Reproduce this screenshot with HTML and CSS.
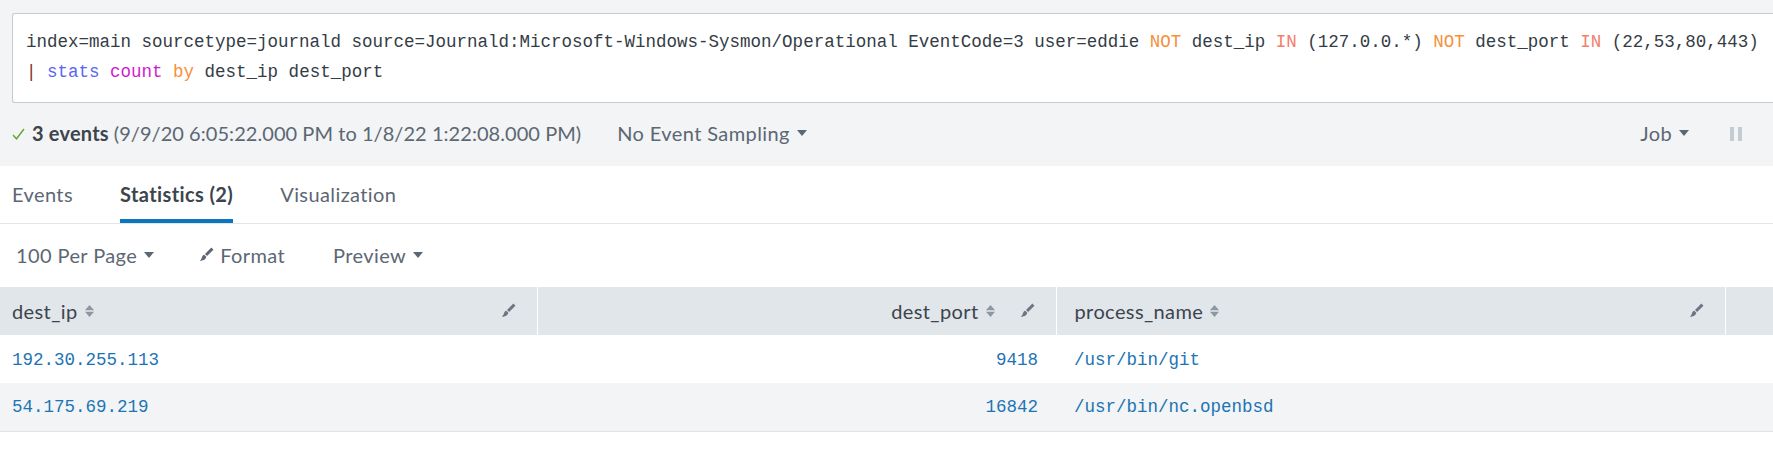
FILE: index.html
```html
<!DOCTYPE html>
<html lang="en">
<head>
<meta charset="utf-8">
<title>Search</title>
<link rel="stylesheet" href="styles.css">
</head>
<body>
<div class="search-area">
  <div class="search-box">
    <div class="line">index=main sourcetype=journald source=Journald:Microsoft-Windows-Sysmon/Operational EventCode=3 user=eddie <span class="kw">NOT</span> dest_ip <span class="kw-in">IN</span> (127.0.0.*) <span class="kw">NOT</span> dest_port <span class="kw-in">IN</span> (22,53,80,443)</div>
    <div class="line"><span class="pipe">|</span> <span class="cmd">stats</span> <span class="fn">count</span> <span class="kw">by</span> dest_ip dest_port</div>
  </div>
</div>

<div class="status">
  <div class="status-left">
    <svg class="check" width="13" height="12" viewBox="0 0 13 12"><polyline points="1,7 4.5,10.8 12,1" fill="none" stroke="#65a637" stroke-width="1.4"/></svg>
    <span class="count">3 events</span>
    <span class="range">(9/9/20 6:05:22.000 PM to 1/8/22 1:22:08.000 PM)</span>
    <span class="dropdown sampling">No Event Sampling <svg class="caret" width="10" height="6" viewBox="0 0 10 6"><polygon points="0,0 10,0 5,6" fill="#5c6773"/></svg></span>
  </div>
  <div class="status-right">
    <span class="dropdown">Job <svg class="caret" width="10" height="6" viewBox="0 0 10 6"><polygon points="0,0 10,0 5,6" fill="#5c6773"/></svg></span>
    <svg class="pause" width="12" height="14" viewBox="0 0 12 14"><rect x="0" y="0" width="4" height="14" fill="#c3cbd4"/><rect x="8" y="0" width="4" height="14" fill="#c3cbd4"/></svg>
  </div>
</div>

<nav class="tabs">
  <span class="tab">Events</span>
  <span class="tab active">Statistics (2)</span>
  <span class="tab">Visualization</span>
</nav>

<div class="toolbar">
  <span class="dropdown tool">100 Per Page <svg class="caret" width="10" height="6" viewBox="0 0 10 6"><polygon points="0,0 10,0 5,6" fill="#5c6773"/></svg></span>
  <span class="tool format"><svg class="brush" width="15" height="15" viewBox="0 0 16 16"><polygon points="13.2,0.6 15.4,2.8 8.6,9.6 6.4,7.4" fill="#5c6773"/><path d="M5.6 8.2 L7.8 10.4 C7.4 12.6 5.6 14.2 1.0 15.0 C2.2 13.4 2.8 12 3.3 10.6 C3.7 9.4 4.4 8.5 5.6 8.2 Z" fill="#5c6773"/></svg>Format</span>
  <span class="dropdown tool">Preview <svg class="caret" width="10" height="6" viewBox="0 0 10 6"><polygon points="0,0 10,0 5,6" fill="#5c6773"/></svg></span>
</div>

<table class="results">
  <colgroup>
    <col class="c1"><col class="c2"><col class="c3"><col class="c4">
  </colgroup>
  <thead>
    <tr>
      <th class="first"><div class="th-inner"><span>dest_ip</span><svg class="sort" width="9" height="14" viewBox="0 0 9 14"><polygon points="0,6.3 4.5,1 9,6.3" fill="#8d97a1"/><polygon points="0,7.7 4.5,13 9,7.7" fill="#8d97a1"/></svg><span class="spacer"></span><svg class="brush" width="15" height="15" viewBox="0 0 16 16"><polygon points="13.2,0.6 15.4,2.8 8.6,9.6 6.4,7.4" fill="#6b7683"/><path d="M5.6 8.2 L7.8 10.4 C7.4 12.6 5.6 14.2 1.0 15.0 C2.2 13.4 2.8 12 3.3 10.6 C3.7 9.4 4.4 8.5 5.6 8.2 Z" fill="#6b7683"/></svg></div></th>
      <th class="num"><div class="th-inner"><span class="spacer"></span><span>dest_port</span><svg class="sort" width="9" height="14" viewBox="0 0 9 14"><polygon points="0,6.3 4.5,1 9,6.3" fill="#8d97a1"/><polygon points="0,7.7 4.5,13 9,7.7" fill="#8d97a1"/></svg><svg class="brush gap" width="15" height="15" viewBox="0 0 16 16"><polygon points="13.2,0.6 15.4,2.8 8.6,9.6 6.4,7.4" fill="#6b7683"/><path d="M5.6 8.2 L7.8 10.4 C7.4 12.6 5.6 14.2 1.0 15.0 C2.2 13.4 2.8 12 3.3 10.6 C3.7 9.4 4.4 8.5 5.6 8.2 Z" fill="#6b7683"/></svg></div></th>
      <th><div class="th-inner"><span>process_name</span><svg class="sort" width="9" height="14" viewBox="0 0 9 14"><polygon points="0,6.3 4.5,1 9,6.3" fill="#8d97a1"/><polygon points="0,7.7 4.5,13 9,7.7" fill="#8d97a1"/></svg><span class="spacer"></span><svg class="brush" width="15" height="15" viewBox="0 0 16 16"><polygon points="13.2,0.6 15.4,2.8 8.6,9.6 6.4,7.4" fill="#6b7683"/><path d="M5.6 8.2 L7.8 10.4 C7.4 12.6 5.6 14.2 1.0 15.0 C2.2 13.4 2.8 12 3.3 10.6 C3.7 9.4 4.4 8.5 5.6 8.2 Z" fill="#6b7683"/></svg></div></th>
      <th class="last"></th>
    </tr>
  </thead>
  <tbody>
    <tr>
      <td class="first">192.30.255.113</td>
      <td class="num">9418</td>
      <td>/usr/bin/git</td>
      <td class="last"></td>
    </tr>
    <tr class="alt">
      <td class="first">54.175.69.219</td>
      <td class="num">16842</td>
      <td>/usr/bin/nc.openbsd</td>
      <td class="last"></td>
    </tr>
  </tbody>
</table>
</body>
</html>
```

FILE: styles.css
```css
* { box-sizing: border-box; }
html, body { margin: 0; padding: 0; }
body {
  width: 1773px;
  height: 458px;
  overflow: hidden;
  background: #ffffff;
  font-family: Lato, "Noto Sans", sans-serif;
  font-size: 20px;
  letter-spacing: 0.4px;
  color: #3c444d;
}

/* search */
.search-area {
  background: #f2f4f5;
  padding: 13px 0 0 12px;
}
.search-box {
  background: #ffffff;
  border: 1px solid #c3cbd4;
  border-right: none;
  border-radius: 3px 0 0 3px;
  padding: 13px 0 15px 13px;
  font-family: "Liberation Mono", "DejaVu Sans Mono", monospace;
  font-size: 17.5px;
  letter-spacing: 0;
  line-height: 30px;
  color: #343c45;
  white-space: nowrap;
}
.kw { color: #f5903c; }
.kw-in { color: #f2806a; }
.cmd { color: #5766f5; }
.fn { color: #d11bd1; }
.pipe { color: #7d3528; }

/* status */
.status {
  background: #f2f4f5;
  height: 63px;
  display: flex;
  align-items: center;
  justify-content: space-between;
  padding: 0 31px 3px 12px;
  color: #5c6773;
}
.status-left, .status-right {
  display: flex;
  align-items: center;
}
.check { margin-right: 7px; margin-top: 2px; }
.count { font-weight: 700; color: #3c444d; margin-right: 5px; letter-spacing: 0.2px; }
.range { color: #5c6773; letter-spacing: 0.05px; }
.dropdown {
  display: inline-flex;
  align-items: center;
  color: #5c6773;
}
.caret { margin-left: 7px; }
.sampling { margin-left: 36px; }
.pause { margin-left: 41px; margin-top: 2px; }

/* tabs */
.tabs {
  display: flex;
  gap: 47px;
  height: 58px;
  padding-left: 12px;
  background: #ffffff;
  border-bottom: 1px solid #e1e6eb;
}
.tab {
  height: 57px;
  padding-top: 3px;
  border-bottom: 4px solid transparent;
  display: flex;
  align-items: center;
  color: #5c6773;
}
.tab.active {
  font-weight: 700;
  color: #3c444d;
  border-bottom-color: #0b75bd;
}

/* toolbar */
.toolbar {
  height: 63px;
  display: flex;
  align-items: center;
  padding: 0 0 2px 16px;
}
.tool { color: #5c6773; margin-right: 48px; display: inline-flex; align-items: center; }
.tool:first-child { margin-right: 45px; }
.format .brush { margin-right: 6px; }

/* table */
.results {
  width: 1773px;
  border-collapse: collapse;
  table-layout: fixed;
}
.c1 { width: 537px; }
.c2 { width: 519px; }
.c3 { width: 669px; }
.results th {
  height: 48px;
  background: #e1e6eb;
  border-right: 1px solid #ffffff;
  font-weight: 400;
  color: #3c444d;
  text-align: left;
  padding: 0 21px 1px 18px;
}
.results th.last { border-right: none; }
.results th.first { padding-left: 12px; }
.th-inner {
  display: flex;
  align-items: center;
}
.sort { margin-left: 7px; }
.spacer { flex: 1; }
.brush.gap { margin-left: 25px; }
.results td {
  height: 48px;
  padding: 1px 18px 0 18px;
  font-family: "Liberation Mono", "DejaVu Sans Mono", monospace;
  font-size: 17.5px;
  letter-spacing: 0;
  color: #1c74b4;
  white-space: nowrap;
}
.results td.first { padding-left: 12px; }
.results td.num { text-align: right; }
.results tr.alt td {
  background: #f2f4f5;
  border-bottom: 1px solid #dfe4e8;
}
```
